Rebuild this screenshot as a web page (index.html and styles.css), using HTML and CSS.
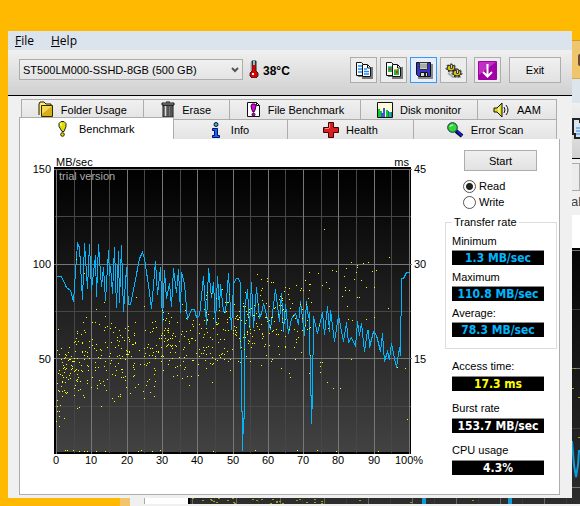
FILE: index.html
```html
<!DOCTYPE html>
<html lang="en">
<head>
    <meta charset="UTF-8">
    <meta name="viewport" content="width=device-width, initial-scale=1.0">
    <title>Disk Benchmark</title>
    <link rel="stylesheet" href="styles.css">
</head>
<body>
    <!-- second copy of the program, mostly covered -->
    <div class="back-window" aria-hidden="true">
        <div class="back-title"><span class="back-close"></span></div>
        <div class="back-menu"></div>
        <div class="back-toolbar">
            <svg width="16" height="24" viewBox="0 0 16 24"><path d="M1 3h7v3h6v16H3v-4H1z" fill="#d8e4f0" stroke="#222" stroke-width="2"/><path d="M4 12h8M4 15h8M4 18h8" stroke="#2a86e0"/></svg>
        </div>
        <div class="back-tabs"></div>
        <div class="back-label">Health</div>
        <div class="back-page"><svg id="back-chart" width="393" height="256" viewBox="0 0 393 256" preserveAspectRatio="xMinYMin slice"></svg></div>
    </div>

    <main class="window">
        <nav class="menubar">
            <a href="#"><u>F</u>ile</a>
            <a href="#"><u>H</u>elp</a>
        </nav>

        <div class="toolbar">
            <div class="drive">
                <select aria-label="Drive">
                    <option>ST500LM000-SSHD-8GB (500 GB)</option>
                </select>
                <svg class="arrow" width="8" height="7" viewBox="0 0 8 7"><path d="M1 1l3 3 3-3" fill="none" stroke="#555" stroke-width="2"/></svg>
            </div>
            <svg class="thermo" width="10" height="18" viewBox="0 0 10 18">
                <path d="M3 1h4v10l2 2v3l-2 2H3l-2-2v-3l2-2z" fill="#e00000" stroke="#222"/>
                <path d="M4 1h2v4H4z" fill="#3fe0e8"/>
                <path d="M2 3v8M0 13v2" stroke="#aaa"/>
                <path d="M3 13h2v2H3z" fill="#fff"/>
            </svg>
            <strong class="temp">38°C</strong>
            <div class="tools">
                <button class="tool" aria-label="Copy text">
                    <svg width="18" height="18" viewBox="0 0 18 18">
                        <path d="M3 15h5v2h9V6" fill="none" stroke="#777" stroke-width="2"/>
                        <path d="M1.500 1.500h5l2 2v11h-7z" fill="#fff" stroke="#111"/>
                        <path d="M3 5h4M3 8h4M3 11h4" stroke="#1a90ff" stroke-width="1.500"/>
                        <path d="M7.500 3.500h5l3 3v9h-8z" fill="#fff" stroke="#111"/>
                        <path d="M12.500 4v3h3" fill="none" stroke="#111"/>
                        <path d="M9 8h3M9 10.500h5M9 13h5" stroke="#1a90ff" stroke-width="1.500"/>
                    </svg>
                </button>
                <button class="tool" aria-label="Copy screenshot">
                    <svg width="18" height="18" viewBox="0 0 18 18">
                        <path d="M3 15h5v2h9V6" fill="none" stroke="#777" stroke-width="2"/>
                        <path d="M1.500 1.500h5l2 2v11h-7z" fill="#fff" stroke="#111"/>
                        <path d="M3 5h4v6H3z" fill="#27b443"/><path d="M4 7h2v2H4z" fill="#e12a1a"/><path d="M3 5h4v1H3z" fill="#40c8e8"/>
                        <path d="M7.500 3.500h5l3 3v9h-8z" fill="#fff" stroke="#111"/>
                        <path d="M12.500 4v3h3" fill="none" stroke="#111"/>
                        <path d="M9 8h5v6H9z" fill="#27b443"/><path d="M11 10h2v2h-2z" fill="#e12a1a"/><path d="M9 8h3v1H9z" fill="#e0c020"/>
                    </svg>
                </button>
                <button class="tool active" aria-label="Save">
                    <svg width="18" height="18" viewBox="0 0 18 18">
                        <path d="M3 17h14V3" fill="none" stroke="#888" stroke-width="2"/>
                        <path d="M1.500 1.500h14v14h-12l-2-2z" fill="#3434c8" stroke="#111"/>
                        <path d="M4.500 1.500h8v7h-8z" fill="#ccc" stroke="#333"/>
                        <path d="M5 4h7M5 6h7" stroke="#888"/>
                        <path d="M5.500 11.500h7v4h-7z" fill="#ddd" stroke="#111"/>
                        <path d="M9 12h2v3H9z" fill="#222"/>
                    </svg>
                </button>
                <button class="tool" aria-label="Options">
                    <svg width="18" height="18" viewBox="0 0 18 18">
                        <path d="M3 12l5 4h8" fill="none" stroke="#aaa" stroke-width="2"/>
                        <ellipse cx="6" cy="7" rx="4" ry="3" fill="#d8c800" stroke="#222"/>
                        <ellipse cx="6" cy="7" rx="5" ry="4" fill="none" stroke="#222" stroke-dasharray="2 2"/>
                        <ellipse cx="12" cy="12" rx="4" ry="3" fill="#d8c800" stroke="#222"/>
                        <ellipse cx="12" cy="12" rx="5" ry="4" fill="none" stroke="#222" stroke-dasharray="2 2"/>
                        <path d="M5.500 3.500h2v4h-2zM11.500 8.500h2v4h-2z" fill="#ccc" stroke="#444"/>
                    </svg>
                </button>
                <button class="tool update" aria-label="Update">
                    <svg width="19" height="19" viewBox="0 0 19 19">
                        <rect width="19" height="19" rx="1" fill="#a000a4"/>
                        <path d="M1 1h17L1 14z" fill="#c030c4"/>
                        <path d="M9.500 3v12M5 11l4.500 4.500L14 11" fill="none" stroke="#fff" stroke-width="2"/>
                    </svg>
                </button>
                <button class="exit">Exit</button>
            </div>
        </div>

        <div class="content">
            <div class="tabs tabs-top">
                <button class="tab folder">
                    <svg width="16" height="17" viewBox="0 0 16 17"><path d="M1 14V3l1-2h4l2 2h5v2" fill="#ffe96a" stroke="#221c00"/><path d="M3.500 4.500h11v11h-11z" fill="#d8ae18" stroke="#332900"/><path d="M4 5h10L4 13z" fill="#f3d95a"/></svg>
                    <span>Folder Usage</span>
                </button>
                <button class="tab erase">
                    <svg width="14" height="17" viewBox="0 0 14 17"><path d="M2 4h10v12H2z" fill="#777" stroke="#111"/><path d="M1 2h12v2H1zM5 1h4" fill="#aaa" stroke="#111"/><path d="M4.500 5v10" stroke="#ddd"/><path d="M7 5v10M10 5v10" stroke="#333"/></svg>
                    <span>Erase</span>
                </button>
                <button class="tab filebench">
                    <svg width="15" height="17" viewBox="0 0 15 17"><path d="M1.500 1.500h9l3 3v11h-12z" fill="#fff" stroke="#111"/><path d="M10.500 1.500v3h3" fill="none" stroke="#111"/><path d="M6 3h3l1 2-1 4-1 2H7L6 9 5 5z" fill="#e000e0" stroke="#300030"/><circle cx="7.500" cy="13.500" r="1.500" fill="#e000e0" stroke="#300030"/></svg>
                    <span>File Benchmark</span>
                </button>
                <button class="tab monitor">
                    <svg width="16" height="16" viewBox="0 0 16 16"><path d="M.5.5h15v15H.5z" fill="#fffcd8" stroke="#111"/><path d="M1 15V7h2v2h2v6M9 15V8h2v2h3v5z" fill="#08d020"/><path d="M4 15v-4h2V6h2v9M11 15v-6h1v6M14 15v-5h1v5z" fill="#3a50f0"/></svg>
                    <span>Disk monitor</span>
                </button>
                <button class="tab aam">
                    <svg width="17" height="16" viewBox="0 0 17 16"><path d="M1 6h3l5-5v14l-5-5H1z" fill="#e4dc18" stroke="#111"/><path d="M6 5v6" stroke="#fff"/><path d="M11 5q2 3 0 6M13 3q4 5 0 10" fill="none" stroke="#111"/></svg>
                    <span>AAM</span>
                </button>
            </div>
            <div class="tabs tabs-bottom">
                <button class="tab bench selected">
                    <svg width="9" height="16" viewBox="0 0 9 16"><path d="M3 .5h3l2 2v3l-2 5H4L1 5.500v-3z" fill="#e0dc00" stroke="#222"/><path d="M3 2v3" stroke="#fff"/><circle cx="4.500" cy="13.500" r="1.800" fill="#e0dc00" stroke="#222"/></svg>
                    <span>Benchmark</span>
                </button>
                <button class="tab info">
                    <svg width="10" height="16" viewBox="0 0 10 16"><circle cx="5" cy="2.500" r="2" fill="#20b0ff" stroke="#111"/><path d="M1.500 6.500h5v7h2v2h-7v-2h2v-5h-2z" fill="#1468ff" stroke="#051060"/></svg>
                    <span>Info</span>
                </button>
                <button class="tab health">
                    <svg width="16" height="16" viewBox="0 0 16 16"><path d="M5.500.5h5v5h5v5h-5v5h-5v-5h-5v-5h5z" fill="#d82020" stroke="#400"/><path d="M6.500 6V1.500M2 6.500h4" stroke="#f88"/></svg>
                    <span>Health</span>
                </button>
                <button class="tab scan">
                    <svg width="17" height="16" viewBox="0 0 17 16"><path d="M9 9l6 5" stroke="#050510" stroke-width="4"/><path d="M10 9l5 5" stroke="#1020e0" stroke-width="2"/><circle cx="5.500" cy="5.500" r="4.800" fill="#30d838" stroke="#124"/><path d="M3 5q0-2 3-2" stroke="#d8ffd8" fill="none"/></svg>
                    <span>Error Scan</span>
                </button>
            </div>

            <section class="panel">
                <svg id="chart" class="chart" viewBox="-34 -13 422 314" role="img" aria-label="Transfer rate and access time"></svg>

                <form class="side">
                    <button type="button" class="start">Start</button>
                    <div class="modes">
                        <label><input type="radio" name="mode" checked>Read</label>
                        <label><input type="radio" name="mode">Write</label>
                    </div>
                    <fieldset>
                        <legend>Transfer rate</legend>
                        <label for="min">Minimum</label>
                        <output id="min">1.3 MB/sec</output>
                        <label for="max">Maximum</label>
                        <output id="max">110.8 MB/sec</output>
                        <label for="avg">Average:</label>
                        <output id="avg">78.3 MB/sec</output>
                    </fieldset>
                    <div class="stats">
                        <label for="access">Access time:</label>
                        <output id="access" class="yellow">17.3 ms</output>
                        <label for="burst">Burst rate</label>
                        <output id="burst" class="white">153.7 MB/sec</output>
                        <label for="cpu">CPU usage</label>
                        <output id="cpu" class="white">4.3%</output>
                    </div>
                </form>
            </section>
        </div>
    </main>

    <script src="chart.js"></script>
</body>
</html>
```

FILE: styles.css
```css
* {
    box-sizing: border-box;
}
body {
    margin: 0;
    min-height: 100vh;
    padding: 31px 8px 8px;
    position: relative;
    overflow: hidden;
    background: #ffb900;
    font-family: "Liberation Sans", Arial, sans-serif;
    font-size: 11px;
    line-height: 14px;
    color: #000;
}
button, select, input {
    font: inherit;
    color: inherit;
    margin: 0;
}
button {
    padding: 0;
    border: 1px solid #adadad;
    background: linear-gradient(#f0f0f0, #e2e2e2);
}
svg {
    display: block;
    flex: none;
}

/* window behind */
.back-window {
    position: absolute;
    top: 40px;
    left: 120px;
    right: 0;
    bottom: 0;
    overflow: hidden;
    background: #f0f0f0;
    border-left: 10px solid #efc66b;
}
.back-title {
    height: 39px;
    background: #efc66b;
    border-top: 1px solid #c79a3c;
    border-bottom: 1px solid #d3a85a;
    display: flex;
    justify-content: flex-end;
    align-items: center;
}
.back-close {
    width: 2px;
    height: 12px;
    border-radius: 2px 0 0 2px;
    background: #6b4a3a;
}
.back-menu {
    height: 24px;
    background: #dde5ec;
}
.back-toolbar {
    height: 56px;
    background: linear-gradient(#f0f0f0, #d0d0d0);
    border-bottom: 1px solid #000;
    display: flex;
    justify-content: flex-end;
    padding-top: 13px;
}
.back-toolbar svg {
    margin-right: -8px;
}
.back-tabs {
    height: 28px;
    border: 1px solid #aaa;
    background: #ececec;
    margin: 4px 0;
}
.back-label {
    height: 20px;
    margin-right: -12px;
    text-align: right;
    font-size: 13px;
    color: #444;
}
.back-page {
    margin-left: 14px;
    padding: 33px 0 0 43px;
    background: #fff;
    border-left: 1px solid #aaa;
}

/* main window */
.window {
    position: relative;
    background: #f0f0f0;
}
.menubar {
    height: 19px;
    display: flex;
    gap: 17px;
    padding-left: 7px;
    background: #dbe3ec;
    font-family: "Open Sans", sans-serif;
    font-size: 12px;
    line-height: 20px;
}
.menubar a {
    color: #000;
    text-decoration: none;
}
.toolbar {
    height: 46px;
    display: flex;
    align-items: flex-start;
    padding: 7px 11px 0;
    background: linear-gradient(#f0f0f0, #d0d0d0);
    border-bottom: 1px solid #000;
}
.drive {
    position: relative;
    flex: 0 1 224px;
    margin-top: 2px;
}
.drive select {
    width: 100%;
    height: 21px;
    padding: 0 20px 0 3px;
    appearance: none;
    border: 1px solid #acacac;
    border-radius: 0;
    background: linear-gradient(#f0f0f0, #e4e4e4);
}
.drive .arrow {
    position: absolute;
    right: 4px;
    top: 8px;
}
.thermo {
    margin: 3px 4px 0 6px;
}
.temp {
    padding-top: 7px;
    font-size: 12px;
}
.tools {
    display: flex;
    gap: 3px;
    margin-left: auto;
}
.tool {
    width: 27px;
    height: 26px;
    display: flex;
    align-items: center;
    justify-content: center;
    background: #ececec;
}
.tool.active {
    border-color: #3399ff;
    background: #e5eefa;
}
.update {
    margin-left: 4px;
}
.exit {
    width: 52px;
    height: 26px;
    margin-left: 5px;
}
.content {
    padding: 3px 12px 3px 11px;
}
.tabs {
    display: flex;
}
.tab {
    height: 20px;
    display: flex;
    align-items: center;
    justify-content: center;
    gap: 7px;
    border: 1px solid #adadad;
    border-bottom: 0;
    border-left: 0;
    background: linear-gradient(#f0f0f0, #e4e4e4);
    white-space: nowrap;
}
.tabs-top {
    margin: 0 3px 0 2px;
}
.tabs-top .tab:first-child {
    border-left: 1px solid #adadad;
}
.tabs-bottom {
    margin-right: 3px;
    align-items: flex-end;
}
.folder { flex: 122 0 0; }
.erase { flex: 86 0 0; }
.filebench { flex: 132 0 0; }
.monitor { flex: 117 0 0; }
.aam { flex: 79 0 0; }
.bench { flex: 154 0 0; }
.info { flex: 114 0 0; gap: 10px; }
.health { flex: 127 0 0; }
.scan { flex: 143 0 0; }
.tab.selected {
    height: 22px;
    margin-top: -2px;
    gap: 12px;
    border-left: 1px solid #adadad;
    background: #fff;
}
.panel {
    display: flex;
    align-items: flex-start;
    background: #fff;
    border: 1px solid #adadad;
    border-top: 0;
    height: 356px;
    padding-top: 11px;
}
.chart {
    flex: 1 1 0;
    min-width: 0;
    margin-top: 4px;
}
.side {
    width: 112px;
    margin: 0 2px 0 3px;
}
.start {
    display: block;
    width: 73px;
    height: 21px;
    margin-left: 19px;
}
.modes {
    margin: 7px 0 5px 18px;
}
.modes label {
    display: flex;
    align-items: center;
    gap: 3px;
    height: 16px;
}
.modes input {
    appearance: none;
    width: 13px;
    height: 13px;
    border: 1px solid #555;
    border-radius: 50%;
    background: #fff;
}
.modes input:checked {
    background: radial-gradient(circle, #222 0 3px, #fff 4px);
}
fieldset {
    margin: 0;
    padding: 5px 6px 11px;
    border: 1px solid #dcdcdc;
}
legend {
    margin-left: 0;
    padding: 0 2px;
}
fieldset label,
.stats label {
    display: block;
    height: 16px;
}
output {
    display: block;
    width: 92px;
    height: 15px;
    margin-bottom: 5px;
    border-top: 1px solid #888;
    background: #000;
    color: #00b7ff;
    font: bold 12px/14px "DejaVu Sans Condensed", "DejaVu Sans", sans-serif;
    text-align: center;
    white-space: nowrap;
}
fieldset output:last-child {
    margin-bottom: 0;
}
.stats {
    padding: 10px 7px 0;
}
.stats label {
    height: 17px;
}
.stats output {
    margin-bottom: 10px;
}
.yellow {
    color: #ffff00;
}
.white {
    color: #fff;
}
```

FILE: chart.js
```js
const NS = 'http://www.w3.org/2000/svg';
const chart = document.getElementById('chart');

function add(parent, tag, attrs, text) {
    const el = document.createElementNS(NS, tag);
    for (const key in attrs) el.setAttribute(key, attrs[key]);
    if (text) el.textContent = text;
    parent.appendChild(el);
    return el;
}

// plot background
chart.innerHTML = '<defs><linearGradient id="plot" x1="0" y1="0" x2="0" y2="1">' +
    '<stop offset="0" stop-color="#000"/><stop offset="1" stop-color="#424242"/></linearGradient></defs>';
add(chart, 'rect', {x: 0, y: 0, width: 357, height: 287, fill: '#000'});
add(chart, 'rect', {x: 2, y: 2, width: 354, height: 283, fill: 'url(#plot)'});

// grid, minor lines first
for (const major of [false, true]) {
    const fill = major ? '#777' : '#464646';
    for (let i = 0; i <= 20; i++) {
        if ((i % 2 === 0) !== major) continue;
        add(chart, 'rect', {x: Math.round(2 + i * 17.65), y: 2, width: 1, height: major ? 285 : 284, fill});
    }
    for (let i = 0; i < 6; i++) {
        if ((i % 2 === 0) !== major) continue;
        add(chart, 'rect', {x: major ? 0 : 1, y: Math.round(2 + i * 47.3), width: major ? 358 : 356, height: 1, fill});
    }
}

// axis labels
add(chart, 'text', {x: 2, y: -1}, 'MB/sec');
add(chart, 'text', {x: 355, y: -1, 'text-anchor': 'end'}, 'ms');
add(chart, 'text', {x: 5, y: 13, fill: '#aaa'}, 'trial version');
['150', '100', '50'].forEach((t, i) => add(chart, 'text', {x: -3, y: 6 + i * 95, 'text-anchor': 'end'}, t));
['45', '30', '15'].forEach((t, i) => add(chart, 'text', {x: 360, y: 6 + i * 95}, t));
for (let i = 0; i <= 10; i++) {
    add(chart, 'text', {x: Math.round(2 + i * 35.3), y: 297, 'text-anchor': 'middle'}, i === 10 ? '100%' : String(i * 10));
}

// access time samples
const dots = [
    [270,62],[335,90],[297,95],[309,96],[314,95],[292,101],[303,98],[303,100],[318,104],[322,103],[302,105],
    [278,103],[282,104],[290,109],[300,112],[307,113],[320,120],[312,120],[272,115],[275,121],[291,120],[291,123],
    [295,123],[288,129],[303,130],[305,130],[268,118],[264,106],[255,105],[251,113],[255,117],[256,117],[242,118],
    [231,120],[203,107],[207,112],[213,111],[217,115],[334,141],[293,139],[320,150],[312,152],[343,200],[351,201],
    [353,252],[297,192],[279,221],[286,221],[273,215],[266,195],[266,199],[266,205],[268,195],[255,206],[236,210],
    [235,206],[227,201],[207,198],[241,192],[201,283],[243,283],[263,283],[282,284],[324,284],[11,283],[13,283],
    [19,283],[25,284],[30,284],[33,284],[42,284],[51,284],[84,284],[87,283],[98,284],[106,283],[159,284],[4,162],
    [32,150],[41,155],[66,227],[81,220],[101,214],[22,92],[30,106],[2,254],[5,259],[10,251],[5,249],[3,244],[5,244],
    [23,241],[25,240],[50,135],[42,142],[82,130],[176,203],[294,152],[298,153],[265,158],[274,161]
];

let seed = 38;
function rnd() {
    seed = (seed * 16807) % 2147483647;
    return seed / 2147483647;
}
for (let i = 0; i < 580; i++) {
    const x = 3 + 255 * Math.pow(rnd(), 1.25);
    const mid = 206 - x * 0.24;
    dots.push([Math.round(x), Math.round(mid + (rnd() + rnd() - 1) * 48)]);
}

// transfer rate curve
const rate = [
    2,109, 7,109, 12,120, 16,123, 19,134, 23,76, 25,80, 28,132, 30,76, 33,121, 35,77, 37,122, 41,88, 42,129,
    44,77, 47,119, 49,100, 51,133, 54,83, 55,108, 56,99, 58,126, 60,80, 62,140, 64,84, 65,135, 67,78, 69,144,
    72,100, 74,137, 76,137, 81,112, 85,91, 88,85, 90,91, 94,118, 97,141, 101,94, 103,127, 106,100, 108,154,
    110,103, 112,131, 115,116, 117,139, 119,101, 122,125, 124,102, 126,145, 127,105, 130,116, 133,152, 137,142,
    140,142, 142,150, 145,149, 149,109, 152,157, 154,101, 157,130, 159,115, 161,155, 163,109, 165,140, 166,117,
    169,144, 171,145, 174,106, 177,162, 179,116, 182,111, 184,111, 186,116, 187,244, 188,244, 188,283, 189,251,
    190,251, 190,141, 193,122, 195,160, 197,115, 199,160, 202,120, 205,150, 207,146, 209,136, 216,162, 221,122,
    225,154, 227,126, 229,164, 231,137, 234,166, 237,151, 241,146, 244,157, 246,134, 250,168, 252,134, 254,150,
    255,145, 256,228, 257,228, 257,256, 258,228, 259,149, 263,166, 268,145, 270,167, 273,139, 275,164, 276,143,
    280,174, 284,148, 289,174, 292,155, 294,175, 297,170, 301,179, 303,154, 305,168, 307,156, 310,184, 313,163,
    314,163, 315,180, 319,164, 322,168, 326,184, 328,166, 330,194, 333,184, 335,192, 337,176, 339,186, 342,200,
    345,180, 346,188, 347,111, 349,111, 352,105, 355,105
];
add(chart, 'polyline', {points: rate.join(' '), fill: 'none', stroke: '#00b7ff', 'shape-rendering': 'crispEdges', transform: 'translate(.5 .5)'});
for (const [x, y] of dots) add(chart, 'rect', {x, y, width: 1, height: 1, fill: '#ff0', 'shape-rendering': 'crispEdges'});

// chart of the window behind, only its edges show
const back = document.getElementById('back-chart');
back.innerHTML = '<defs><linearGradient id="back-plot" x1="0" y1="0" x2="0" y2="1">' +
    '<stop offset="0" stop-color="#050505"/><stop offset="1" stop-color="#2e2e2e"/></linearGradient></defs>';
add(back, 'rect', {width: 393, height: 258, fill: 'url(#back-plot)'});
add(back, 'rect', {width: 2, height: 258, fill: '#000'});
for (let i = 0; i < 18; i++) add(back, 'rect', {x: 4 + i * 22, y: 2, width: 1, height: 256, fill: i % 2 ? '#3a3a3a' : '#666'});
[2, 61, 120, 180, 239].forEach((y, i) => add(back, 'rect', {x: 2, y, width: 391, height: 1, fill: i % 2 ? '#3c3c3c' : '#777'}));
for (let i = 0; i < 30; i++) add(back, 'rect', {x: Math.round(4 + rnd() * 130), y: Math.round(250 + rnd() * 6), width: 2, height: 1, fill: '#a0a010'});
for (const [x, y] of [[386,120],[384,140],[390,149],[390,189],[284,252],[171,252],[222,254]]) add(back, 'rect', {x, y, width: 2, height: 1, fill: '#a0a010'});
add(back, 'path', {d: 'M235 245v13M237 245v13M321 245v13M323 245v13M384 193l2 24 2 12 2-12 1-14h3', fill: 'none', stroke: '#0f9bd8', 'stroke-width': 2});
```
